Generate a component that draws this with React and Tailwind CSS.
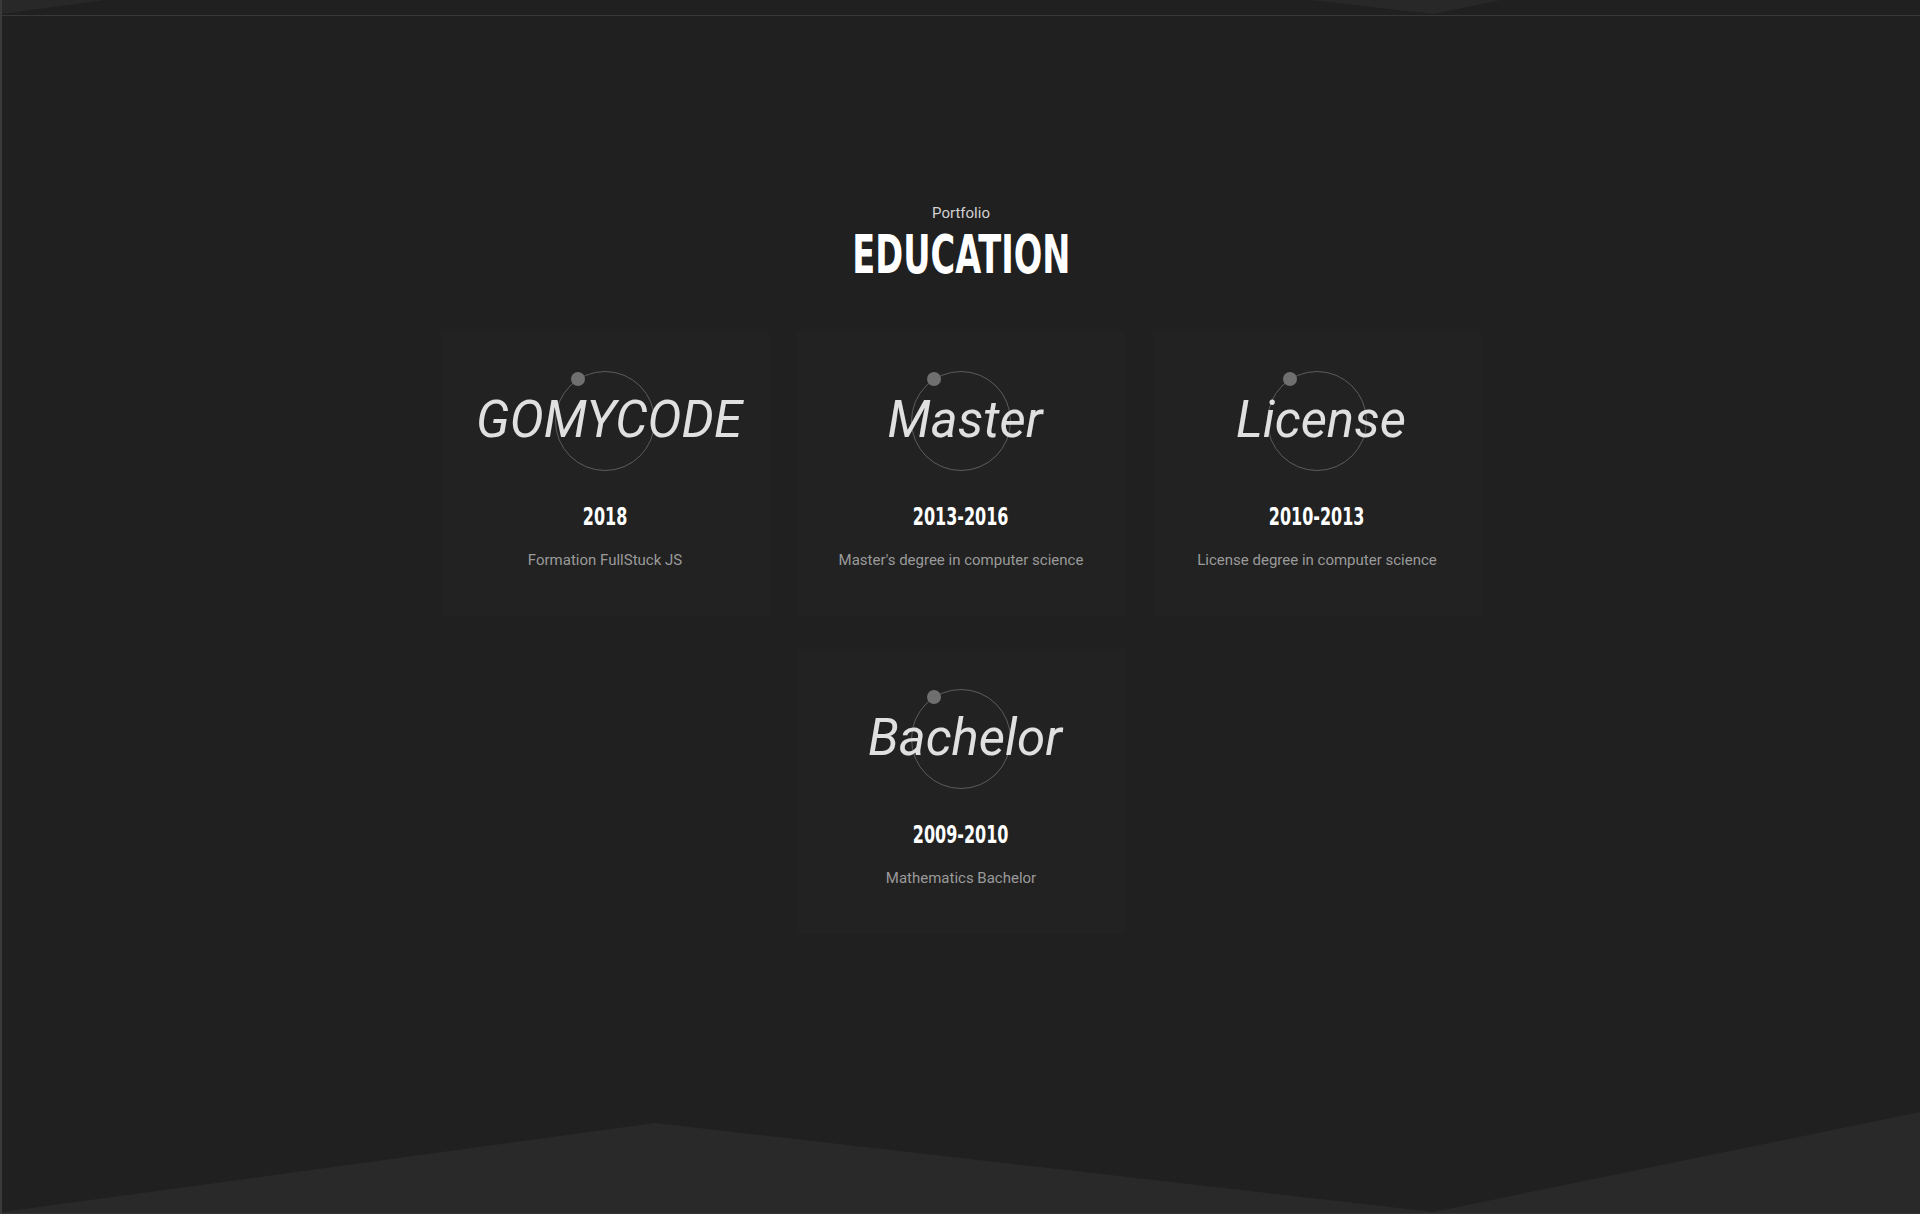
import React from "react";

const items = [
  { title: "GOMYCODE", year: "2018", desc: "Formation FullStuck JS" },
  { title: "Master", year: "2013-2016", desc: "Master's degree in computer science" },
  { title: "License", year: "2010-2013", desc: "License degree in computer science" },
  { title: "Bachelor", year: "2009-2010", desc: "Mathematics Bachelor", center: true },
];

function Card({ title, year, desc, center }) {
  return (
    <div
      className={
        "flex flex-col items-center bg-[#222222] pt-[40px] pb-[45px] " +
        (center ? "col-start-2" : "")
      }
    >
      <div className="relative w-[100px] h-[100px] shrink-0">
        <div className="absolute inset-0 rounded-full border border-[#5c5c5c]" />
        <div className="absolute left-[16px] top-[1px] w-[14px] h-[14px] rounded-full bg-[#6f6f6f]" />
        <div className="absolute left-[calc(50%+4px)] top-[23px] -translate-x-1/2 whitespace-nowrap text-[51px] leading-[51px] italic font-normal text-[#e0e0e0] font-['Roboto',sans-serif]">
          {title}
        </div>
      </div>
      <div className="mt-[34px] inline-block scale-x-[0.74] text-[24px] leading-[24px] font-bold text-white font-['DejaVu_Sans_Condensed','DejaVu_Sans',sans-serif]">
        {year}
      </div>
      <div className="mt-[20px] text-[15px] leading-[22px] text-[#9a9a9a] font-['Roboto',sans-serif]">
        {desc}
      </div>
    </div>
  );
}

export default function App() {
  return (
    <div className="relative h-[1214px] w-full overflow-hidden bg-[#202020] border-l-2 border-[#3a3a3a] flex flex-col">
      <svg className="block w-full h-[15px] shrink-0" viewBox="0 0 1918 15" preserveAspectRatio="none">
        <polygon points="0,0 103,0 0,14" fill="#282828" />
        <polygon points="1309,0 1499,0 1431,14" fill="#282828" />
      </svg>
      <div className="h-px w-full bg-[#383838] shrink-0" />
      <div className="relative z-10 flex flex-col items-center pt-[187px]">
        <div className="text-[15px] leading-[20px] text-[#d2d2d2] font-['Roboto',sans-serif]">Portfolio</div>
        <h2 className="mt-[9px] inline-block scale-x-[0.83] scale-y-[1.19] text-[45px] leading-[45px] font-bold text-white font-['DejaVu_Sans_Condensed','DejaVu_Sans',sans-serif]">
          EDUCATION
        </h2>
        <div className="mt-[54px] w-[1040px] grid grid-cols-3 gap-x-[28px] gap-y-[33px]">
          {items.map((it) => (
            <Card key={it.title} {...it} />
          ))}
        </div>
      </div>
      <svg
        className="absolute left-0 bottom-0 w-full h-[102px]"
        viewBox="0 1112 1918 102"
        preserveAspectRatio="none"
      >
        <polygon points="0,1212 653,1123 1431,1212 1918,1112 1918,1214 0,1214" fill="#292929" />
        <rect x="0" y="1213" width="1918" height="1" fill="#333333" />
      </svg>
    </div>
  );
}
